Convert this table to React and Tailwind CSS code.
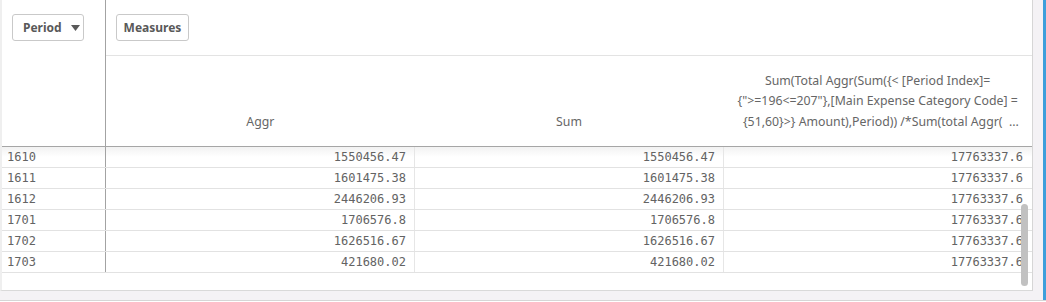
const rows = [
  ['1610', '1550456.47', '1550456.47', '17763337.6'],
  ['1611', '1601475.38', '1601475.38', '17763337.6'],
  ['1612', '2446206.93', '2446206.93', '17763337.6'],
  ['1701', '1706576.8', '1706576.8', '17763337.6'],
  ['1702', '1626516.67', '1626516.67', '17763337.6'],
  ['1703', '421680.02', '421680.02', '17763337.6'],
];

const mono = { fontFamily: '"DejaVu Sans Mono", monospace' };

const Chip = ({ children, className = '' }) => (
  <div
    className={`h-[27px] flex items-center border border-[#c9c9c9] rounded-[3px] bg-white text-[12px] font-bold text-[#595959] ${className}`}
  >
    {children}
  </div>
);

export default function App() {
  return (
    <div
      className="w-[1046px] h-[302px] bg-[#f4f2f5] flex flex-col overflow-hidden"
      style={{ fontFamily: '"Noto Sans", sans-serif' }}
    >
      <div className="flex h-[300px]">
        <div className="relative w-[1033px] h-[291px] bg-white border-l-2 border-[#efefef] border-r border-b border-r-[#d6d6d6] border-b-[#d9d9d9] flex flex-col">
          {/* header */}
          <div className="flex h-[147px] border-b border-[#a6a6a6]">
            <div className="w-[104px] shrink-0 border-r border-[#a3a3a3] pt-[14px] pl-[10px]">
              <Chip className="w-[72px] pl-[10px] gap-[9px]">
                <span>Period</span>
                <svg width="9" height="6" viewBox="0 0 9 6">
                  <path d="M0 0h9L4.5 6z" fill="#595959" />
                </svg>
              </Chip>
            </div>
            <div className="flex-1 flex flex-col">
              <div className="h-[56px] border-b border-[#e3e3e3] pt-[14px] pl-[10px]">
                <Chip className="w-[73px] justify-center">Measures</Chip>
              </div>
              <div className="flex-1 grid grid-cols-3 text-[12.3px] text-[#666666] leading-[20.5px]">
                <div className="flex items-end justify-center pb-[14px]">Aggr</div>
                <div className="flex items-end justify-center pb-[14px]">Sum</div>
                <div className="flex items-end justify-center text-center pb-[14px] px-[8px]">
                  <span>
                    Sum(Total Aggr(Sum({'{'}&lt; [Period Index]=
                    <br />
                    {'{'}"&gt;=196&lt;=207"{'}'},[Main Expense Category Code] =
                    <br />
                    &nbsp;&nbsp;{'{'}51,60{'}'}&gt;{'}'} Amount),Period)) /*Sum(total Aggr(&nbsp; ...
                  </span>
                </div>
              </div>
            </div>
          </div>
          {/* body */}
          <div className="text-[12px] text-[#636363]" style={mono}>
            {rows.map((r, i) => (
              <div
                key={r[0]}
                className={`flex h-[21px] border-b border-[#e2e2e2] ${
                  i === 0 ? 'bg-gradient-to-b from-[#f2f2f2] to-white to-50%' : ''
                }`}
              >
                <div className="w-[104px] shrink-0 border-r border-[#a3a3a3] pl-[5px] flex items-center">
                  {r[0]}
                </div>
                <div className="w-[309px] border-r border-[#e6e6e6] pr-[8px] flex items-center justify-end">
                  {r[1]}
                </div>
                <div className="w-[309px] border-r border-[#e6e6e6] pr-[8px] flex items-center justify-end">
                  {r[2]}
                </div>
                <div className="flex-1 pr-[9px] flex items-center justify-end">{r[3]}</div>
              </div>
            ))}
          </div>
          <div className="absolute left-[1019px] top-[204px] w-[7px] h-[82px] rounded-full bg-[#c1c1c1]" />
        </div>
        <div className="w-[10px]" />
        <div className="w-[3px] bg-[#3d9fdb]" />
      </div>
      <div className="h-px bg-[#d6d6d6]" />
      <div className="flex-1 bg-white" />
    </div>
  );
}
